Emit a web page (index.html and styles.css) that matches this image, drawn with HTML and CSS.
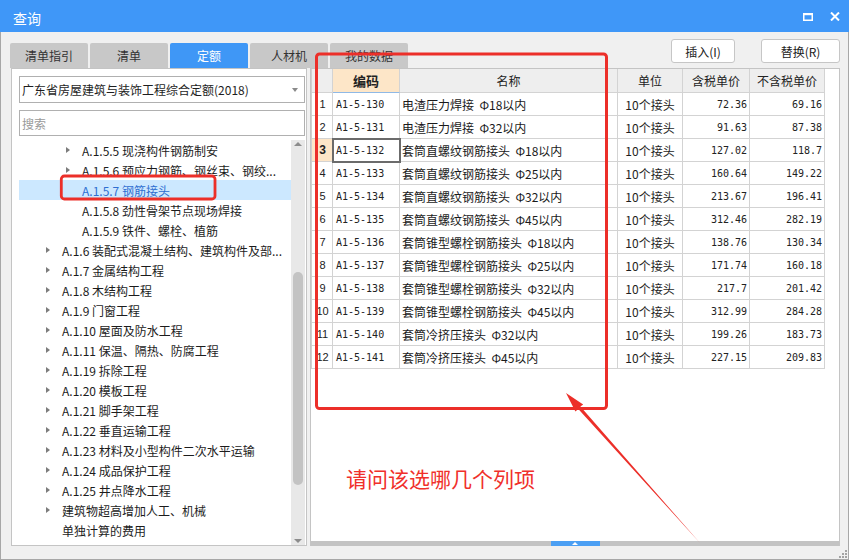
FILE: index.html
```html
<!DOCTYPE html>
<html lang="zh">
<head>
<meta charset="utf-8">
<title>查询</title>
<link rel="stylesheet" href="styles.css">
</head>
<body>
<div class="window">
  <div class="titlebar">
    <span class="title">查询</span>
    <div class="winbtns">
      <svg class="ico-max" width="10" height="8" viewBox="0 0 10 8"><rect x="0.75" y="1" width="8.5" height="6.25" fill="none" stroke="#fff" stroke-width="1.5"/><rect x="0" y="0" width="10" height="2.2" fill="#fff"/></svg>
      <svg class="ico-close" width="10" height="9" viewBox="0 0 10 9"><path d="M1 0.5 L9 8.5 M9 0.5 L1 8.5" stroke="#fff" stroke-width="2"/></svg>
    </div>
  </div>
  <div class="body">
    <div class="toolbar">
      <div class="tabs">
        <div class="tab">清单指引</div>
        <div class="tab">清单</div>
        <div class="tab active">定额</div>
        <div class="tab">人材机</div>
        <div class="tab">我的数据</div>
      </div>
      <div class="actions">
        <div class="btn btn-insert">插入(I)</div>
        <div class="btn btn-replace">替换(R)</div>
      </div>
    </div>
    <div class="content">
      <div class="left">
        <div class="select"><span class="select-text">广东省房屋建筑与装饰工程综合定额(2018)</span><span class="caret"></span></div>
        <div class="search">搜索</div>
        <div class="tree">
          <div class="tree-rows">
            <div class="row l3"><span class="arr"><i></i></span>A.1.5.5 现浇构件钢筋制安</div>
            <div class="row l3"><span class="arr"><i></i></span>A.1.5.6 预应力钢筋、钢丝束、钢绞...</div>
            <div class="row l3 selected"><span class="arr"></span>A.1.5.7 钢筋接头</div>
            <div class="row l3"><span class="arr"></span>A.1.5.8 劲性骨架节点现场焊接</div>
            <div class="row l3"><span class="arr"></span>A.1.5.9 铁件、螺栓、植筋</div>
            <div class="row l2"><span class="arr"><i></i></span>A.1.6 装配式混凝土结构、建筑构件及部...</div>
            <div class="row l2"><span class="arr"><i></i></span>A.1.7 金属结构工程</div>
            <div class="row l2"><span class="arr"><i></i></span>A.1.8 木结构工程</div>
            <div class="row l2"><span class="arr"><i></i></span>A.1.9 门窗工程</div>
            <div class="row l2"><span class="arr"><i></i></span>A.1.10 屋面及防水工程</div>
            <div class="row l2"><span class="arr"><i></i></span>A.1.11 保温、隔热、防腐工程</div>
            <div class="row l2"><span class="arr"><i></i></span>A.1.19 拆除工程</div>
            <div class="row l2"><span class="arr"><i></i></span>A.1.20 模板工程</div>
            <div class="row l2"><span class="arr"><i></i></span>A.1.21 脚手架工程</div>
            <div class="row l2"><span class="arr"><i></i></span>A.1.22 垂直运输工程</div>
            <div class="row l2"><span class="arr"><i></i></span>A.1.23 材料及小型构件二次水平运输</div>
            <div class="row l2"><span class="arr"><i></i></span>A.1.24 成品保护工程</div>
            <div class="row l2"><span class="arr"><i></i></span>A.1.25 井点降水工程</div>
            <div class="row l2"><span class="arr"><i></i></span>建筑物超高增加人工、机械</div>
            <div class="row l2"><span class="arr"></span>单独计算的费用</div>
            <div class="row l2"><span class="arr"></span>混凝土、砂浆制作含量表</div>
          </div>
          <div class="vscroll">
            <div class="sarrow up"><i></i></div>
            <div class="strack"><div class="thumb"></div></div>
            <div class="sarrow down"><i></i></div>
          </div>
        </div>
      </div>
      <div class="right">
        <div class="grid">
          <div class="hc corner"></div>
          <div class="hc hc-code">编码</div>
          <div class="hc">名称</div>
          <div class="hc">单位</div>
          <div class="hc">含税单价</div>
          <div class="hc">不含税单价</div>

          <div class="c rn">1</div><div class="c code">A1-5-130</div><div class="c name">电渣压力焊接&nbsp; Φ18以内</div><div class="c unit">10个接头</div><div class="c num">72.36</div><div class="c num">69.16</div>
          <div class="c rn">2</div><div class="c code">A1-5-131</div><div class="c name">电渣压力焊接&nbsp; Φ32以内</div><div class="c unit">10个接头</div><div class="c num">91.63</div><div class="c num">87.38</div>
          <div class="c rn cur">3</div><div class="c code sel">A1-5-132</div><div class="c name">套筒直螺纹钢筋接头&nbsp; Φ18以内</div><div class="c unit">10个接头</div><div class="c num">127.02</div><div class="c num">118.7</div>
          <div class="c rn">4</div><div class="c code">A1-5-133</div><div class="c name">套筒直螺纹钢筋接头&nbsp; Φ25以内</div><div class="c unit">10个接头</div><div class="c num">160.64</div><div class="c num">149.22</div>
          <div class="c rn">5</div><div class="c code">A1-5-134</div><div class="c name">套筒直螺纹钢筋接头&nbsp; Φ32以内</div><div class="c unit">10个接头</div><div class="c num">213.67</div><div class="c num">196.41</div>
          <div class="c rn">6</div><div class="c code">A1-5-135</div><div class="c name">套筒直螺纹钢筋接头&nbsp; Φ45以内</div><div class="c unit">10个接头</div><div class="c num">312.46</div><div class="c num">282.19</div>
          <div class="c rn">7</div><div class="c code">A1-5-136</div><div class="c name">套筒锥型螺栓钢筋接头&nbsp; Φ18以内</div><div class="c unit">10个接头</div><div class="c num">138.76</div><div class="c num">130.34</div>
          <div class="c rn">8</div><div class="c code">A1-5-137</div><div class="c name">套筒锥型螺栓钢筋接头&nbsp; Φ25以内</div><div class="c unit">10个接头</div><div class="c num">171.74</div><div class="c num">160.18</div>
          <div class="c rn">9</div><div class="c code">A1-5-138</div><div class="c name">套筒锥型螺栓钢筋接头&nbsp; Φ32以内</div><div class="c unit">10个接头</div><div class="c num">217.7</div><div class="c num">201.42</div>
          <div class="c rn">10</div><div class="c code">A1-5-139</div><div class="c name">套筒锥型螺栓钢筋接头&nbsp; Φ45以内</div><div class="c unit">10个接头</div><div class="c num">312.99</div><div class="c num">284.28</div>
          <div class="c rn">11</div><div class="c code">A1-5-140</div><div class="c name">套筒冷挤压接头&nbsp; Φ32以内</div><div class="c unit">10个接头</div><div class="c num">199.26</div><div class="c num">183.73</div>
          <div class="c rn">12</div><div class="c code">A1-5-141</div><div class="c name">套筒冷挤压接头&nbsp; Φ45以内</div><div class="c unit">10个接头</div><div class="c num">227.15</div><div class="c num">209.83</div>
        </div>
        <div class="hbar"><span class="handle"><i></i></span></div>
      </div>
    </div>
    <div class="status">
      <svg width="9" height="9" viewBox="0 0 9 9" fill="#a3a3a3"><rect x="7" y="1" width="2" height="2"/><rect x="4" y="4" width="2" height="2"/><rect x="7" y="4" width="2" height="2"/><rect x="1" y="7" width="2" height="2"/><rect x="4" y="7" width="2" height="2"/><rect x="7" y="7" width="2" height="2"/></svg>
    </div>
  </div>

  <svg class="annot" width="850" height="560" viewBox="0 0 850 560">
    <rect x="61.3" y="176" width="153.7" height="23" rx="3" fill="none" stroke="#ec2f29" stroke-width="2.8"/>
    <rect x="316.5" y="54" width="290" height="354.5" rx="3" fill="none" stroke="#ec2f29" stroke-width="3"/>
    <polygon points="566,393 575.4,411.4 578.3,409.0 700,543 580.4,406.6 583.2,404.4" fill="#ec2f29"/>
  </svg>
  <div class="annot-text">请问该选哪几个列项</div>
</div>
</body>
</html>
```

FILE: styles.css
```css
* { box-sizing: border-box; }
html, body { margin: 0; padding: 0; background: #ffffff; }
body {
  font-family: "Noto Sans CJK SC", "Noto Sans", sans-serif;
  font-size: 12px;
  color: #1e1e1e;
}
.window { position: relative; width: 849px; height: 560px; }

.titlebar {
  height: 32px;
  background: #3f97f8;
  display: flex;
  align-items: center;
  padding-left: 13px;
  color: #fff;
}
.title { font-size: 14px; flex: 1; padding-top: 3px; }
.winbtns { display: flex; align-items: center; gap: 17px; margin-right: 9px; padding-top: 1px; }
.winbtns svg { display: block; }

.body {
  height: 528px;
  background: #f0f0f0;
  border: 1px solid #a7a7a7;
  border-top: 0;
  display: flex;
  flex-direction: column;
}

.toolbar { height: 36px; display: flex; justify-content: space-between; padding: 0 8px 0 9px; flex: none; }
.tabs { display: flex; gap: 2px; align-items: flex-end; }
.tab {
  width: 78px; height: 25px;
  background: #c8c8c8;
  color: #333;
  display: flex; align-items: center; justify-content: center;
  border-radius: 2px 2px 0 0;
}
.tab.active { background: #3f97f6; color: #fff; }
.actions { display: flex; gap: 26px; padding-top: 7px; align-items: flex-start; }
.btn {
  height: 24px;
  background: #fff;
  border: 1px solid #c6c6c6;
  border-radius: 3px;
  display: flex; align-items: center; justify-content: center;
  color: #222;
}
.btn-insert { width: 64px; }
.btn-replace { width: 79px; }

.content { height: 478px; display: flex; gap: 3px; padding-left: 10px; flex: none; }

.left {
  width: 296px;
  height: 478px;
  background: #fff;
  border: 1px solid #c4c4c4;
  padding: 7px 1px 0 7px;
  display: flex;
  flex-direction: column;
}
.select {
  height: 27px;
  border: 1px solid #b0b0b0;
  display: flex; align-items: center;
  padding: 0 6px 0 2px;
  flex: none;
}
.select-text { flex: 1; white-space: nowrap; }
.caret {
  width: 0; height: 0;
  border-left: 3.5px solid transparent;
  border-right: 3.5px solid transparent;
  border-top: 4px solid #8a8a8a;
}
.search {
  height: 26px;
  margin-top: 7px;
  border: 1px solid #b0b0b0;
  color: #9a9a9a;
  display: flex; align-items: center;
  padding-left: 2px;
  flex: none;
}
.tree { flex: 1; min-height: 0; margin-top: 4px; display: flex; overflow: hidden; }
.tree-rows { flex: 1; min-width: 0; }
.row {
  height: 20px;
  display: flex; align-items: center;
  white-space: nowrap;
  color: #1c1c1c;
}
.row.l2 { padding-left: 27px; }
.row.l3 { padding-left: 47px; }
.arr { width: 16px; height: 20px; display: flex; align-items: center; flex: none; }
.arr i {
  display: block; width: 0; height: 0;
  border-left: 4px solid #7c7c7c;
  border-top: 3.5px solid transparent;
  border-bottom: 3.5px solid transparent;
}
.row.selected { background: #cce8ff; color: #2f6fd1; }

.vscroll { width: 14px; background: #e8e8e8; display: flex; flex-direction: column; flex: none; }
.sarrow { height: 8px; display: flex; align-items: center; justify-content: center; flex: none; }
.sarrow i { display: block; width: 0; height: 0; border-left: 4px solid transparent; border-right: 4px solid transparent; }
.sarrow.up i { border-bottom: 4px solid #8c8c8c; }
.sarrow.down i { border-top: 4px solid #8c8c8c; }
.strack { flex: 1; }
.thumb { margin: 124px auto 0; width: 10px; height: 213px; background: #c3c3c3; border-radius: 5px; }

.right {
  width: 530px;
  height: 478px;
  background: #fff;
  border: 1px solid #c4c4c4;
  border-bottom: 0;
  display: flex;
  flex-direction: column;
}
.grid {
  display: grid;
  grid-template-columns: 21px 67px 218px 65px 67px 75px;
  width: max-content;
  border-left: 1px solid #cfcfcf;
}
.hc, .c {
  border-right: 1px solid #d3d3d3;
  border-bottom: 1px solid #d3d3d3;
  display: flex; align-items: center;
  white-space: nowrap;
  overflow: hidden;
}
.hc { height: 24px; background: #eeeeee; justify-content: center; color: #222; }
.hc-code { background: #fde6c8; font-weight: 700; font-size: 13px; border-bottom-color: #8fb9e6; }
.c { height: 23px; background: #fff; }
.rn { font-family: "Liberation Sans", Arial, sans-serif; font-size: 11px; justify-content: center; padding: 0 1px 0 2px; color: #222; }
.rn.cur { background: #fde6c8; font-weight: 700; font-size: 12px; }
.code { font-family: "DejaVu Sans Mono", monospace; font-size: 10px; padding-left: 3px; color: #222; }
.code.sel { outline: 2px solid #6b6b6b; outline-offset: -1px; position: relative; z-index: 1; overflow: visible; }
.name { padding-left: 2px; color: #1a1a1a; }
.unit { justify-content: center; }
.num { font-family: "DejaVu Sans Mono", monospace; font-size: 10px; justify-content: flex-end; padding-right: 2px; color: #222; }

.hbar {
  margin-top: auto;
  height: 5px;
  background: #c3c3c3;
  display: flex; justify-content: center;
  flex: none;
}
.handle { width: 49px; height: 5px; background: #4b9ff3; display: flex; justify-content: center; align-items: center; }
.handle i { display: block; width: 0; height: 0; border-left: 3px solid transparent; border-right: 3px solid transparent; border-bottom: 3px solid #fff; }

.status { flex: 1; display: flex; justify-content: flex-end; align-items: flex-end; padding: 0 1px 1px 0; }
.status svg { display: block; }

.annot { position: absolute; left: 0; top: 0; pointer-events: none; }
.annot-text {
  position: absolute;
  left: 346px;
  top: 468px;
  font-size: 21px;
  line-height: 21px;
  color: #f0302b;
  white-space: nowrap;
}
```
